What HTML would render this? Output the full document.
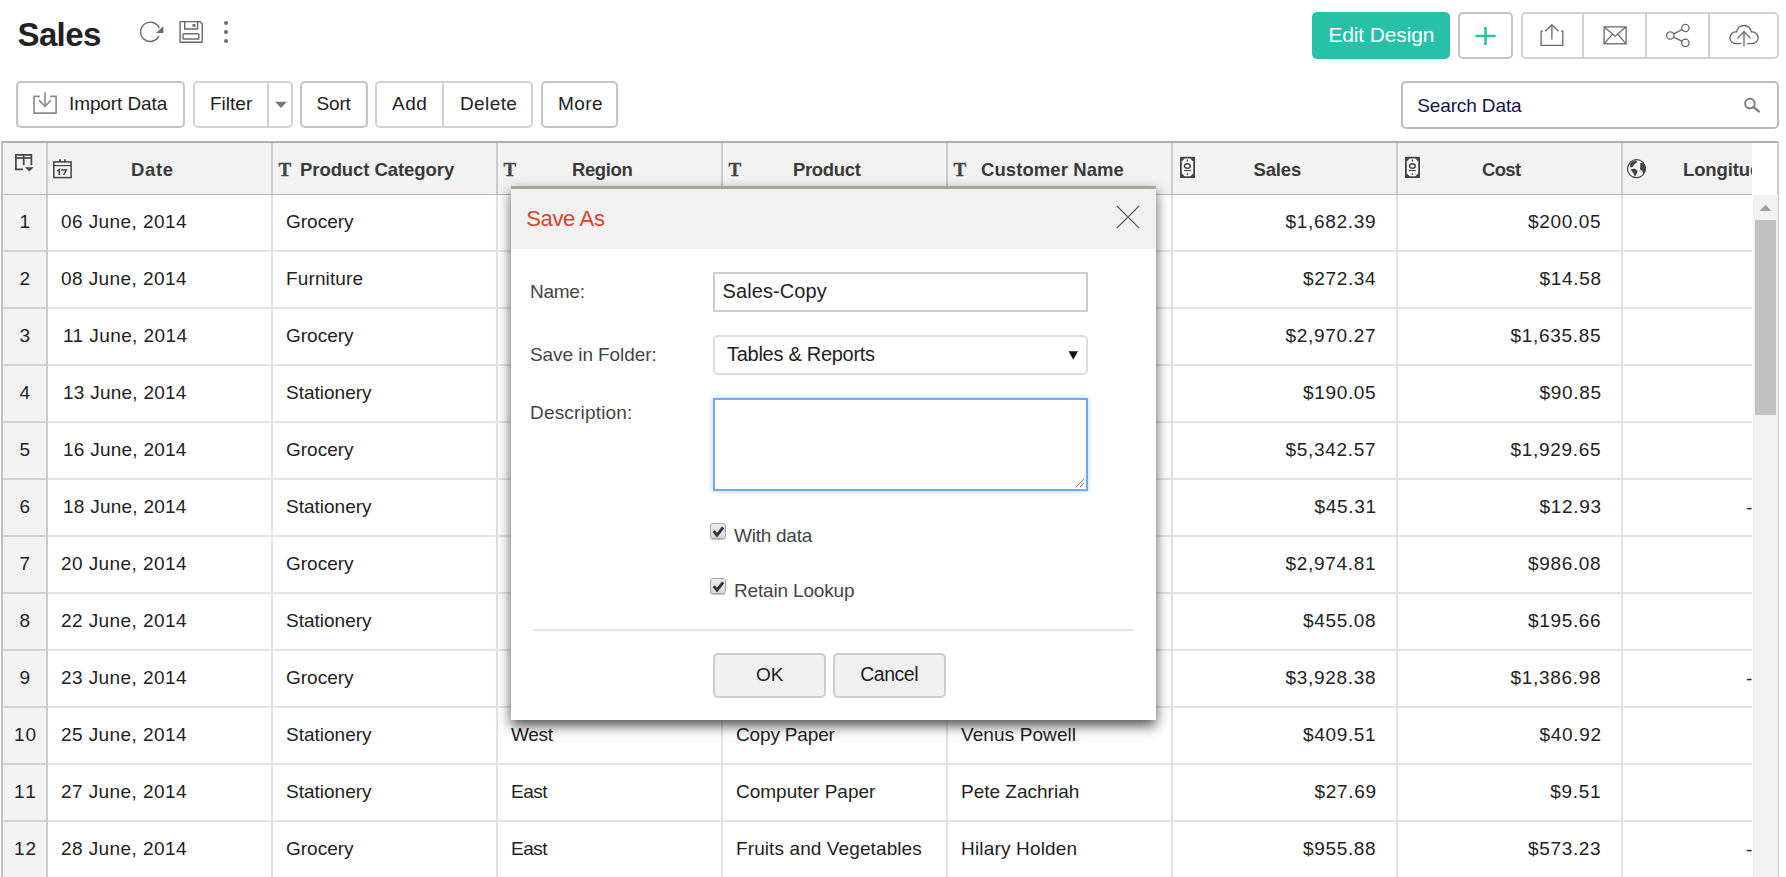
<!DOCTYPE html>
<html><head><meta charset="utf-8"><title>Sales</title>
<style>
html,body{margin:0;padding:0;background:#fff;}
body{width:1786px;height:877px;overflow:hidden;position:relative;font-family:"Liberation Sans",sans-serif;}
.t{position:absolute;white-space:pre;line-height:24px;height:24px;display:block;}
.b{position:absolute;box-sizing:border-box;}
svg{position:absolute;overflow:visible;}
</style></head><body>
<span class="t" style="left:17.50px;top:22.60px;font-size:33px;font-weight:700;color:#222;letter-spacing:-0.625px;">Sales</span>
<div class="b" style="left:224px;top:20.9px;width:4px;height:4px;background:#6b6b6b;border-radius:50%"></div>
<div class="b" style="left:224px;top:30px;width:4px;height:4px;background:#6b6b6b;border-radius:50%"></div>
<div class="b" style="left:224px;top:39px;width:4px;height:4px;background:#6b6b6b;border-radius:50%"></div>
<div class="b" style="left:16px;top:81px;width:169px;height:47px;border:2px solid #c4c4c4;border-radius:5px;background:#fff;"></div>
<span class="t" style="left:69.00px;top:92.00px;font-size:19px;font-weight:400;color:#222;letter-spacing:-0.100px;">Import Data</span>
<div class="b" style="left:193px;top:81px;width:100px;height:47px;border:2px solid #d2d2d2;border-radius:5px;background:#fff;"></div>
<div class="b" style="left:267px;top:83px;width:2px;height:43px;background:#d2d2d2"></div>
<span class="t" style="left:210.00px;top:92.00px;font-size:19px;font-weight:400;color:#222;letter-spacing:0.000px;">Filter</span>
<div class="b" style="left:300px;top:81px;width:68px;height:47px;border:2px solid #c4c4c4;border-radius:5px;background:#fff;"></div>
<span class="t" style="left:316.60px;top:92.00px;font-size:19px;font-weight:400;color:#222;letter-spacing:-0.200px;">Sort</span>
<div class="b" style="left:375px;top:81px;width:158px;height:47px;border:2px solid #d2d2d2;border-radius:5px;background:#fff;"></div>
<div class="b" style="left:442px;top:83px;width:2px;height:43px;background:#d2d2d2"></div>
<span class="t" style="left:392.00px;top:92.00px;font-size:19px;font-weight:400;color:#222;letter-spacing:0.500px;">Add</span>
<span class="t" style="left:460.00px;top:92.00px;font-size:19px;font-weight:400;color:#222;letter-spacing:0.400px;">Delete</span>
<div class="b" style="left:541px;top:81px;width:77px;height:47px;border:2px solid #c4c4c4;border-radius:5px;background:#fff;"></div>
<span class="t" style="left:558.00px;top:92.00px;font-size:19px;font-weight:400;color:#222;letter-spacing:0.433px;">More</span>
<div class="b" style="left:1312px;top:12px;width:138px;height:47px;background:#27c1a9;border-radius:5px;"></div>
<span class="t" style="left:1328.40px;top:23.00px;font-size:21px;font-weight:400;color:#fff;letter-spacing:-0.140px;">Edit Design</span>
<div class="b" style="left:1458px;top:12px;width:55px;height:47px;border:2px solid #c4c4c4;border-radius:5px;background:#fff;"></div>
<div class="b" style="left:1521px;top:12px;width:258px;height:47px;border:2px solid #d2d2d2;border-radius:5px;background:#fff;"></div>
<div class="b" style="left:1582px;top:14px;width:2px;height:43px;background:#d2d2d2"></div>
<div class="b" style="left:1645px;top:14px;width:2px;height:43px;background:#d2d2d2"></div>
<div class="b" style="left:1708px;top:14px;width:2px;height:43px;background:#d2d2d2"></div>
<div class="b" style="left:1401px;top:81px;width:378px;height:48px;border:2px solid #bbb;border-radius:5px;background:#fff;"></div>
<span class="t" style="left:1417.20px;top:94.00px;font-size:19px;font-weight:400;color:#15154a;letter-spacing:-0.120px;">Search Data</span>
<div class="b" style="left:1px;top:141px;width:1778px;height:54px;background:#f2f2f2"></div>
<div class="b" style="left:1752px;top:143px;width:25px;height:52px;background:#fff"></div>
<div class="b" style="left:1px;top:195px;width:46px;height:690px;background:#f2f2f2"></div>
<div class="b" style="left:1px;top:141px;width:1778px;height:2px;background:#b0b0b0"></div>
<div class="b" style="left:1px;top:141px;width:2px;height:740px;background:#c0c0c0"></div>
<div class="b" style="left:1777px;top:141px;width:2px;height:740px;background:#ccc"></div>
<div class="b" style="left:1753px;top:195px;width:24.8px;height:690px;background:#f1f1f1"></div>
<div class="b" style="left:1755px;top:220px;width:21px;height:195px;background:#c1c1c1"></div>
<div class="b" style="left:3px;top:194px;width:1749px;height:1px;background:#b8b8b8"></div>
<div class="b" style="left:3px;top:250px;width:45px;height:2px;background:#d0d0d0"></div>
<div class="b" style="left:48px;top:250px;width:1704px;height:2px;background:#e4e4e4"></div>
<div class="b" style="left:3px;top:307px;width:45px;height:2px;background:#d0d0d0"></div>
<div class="b" style="left:48px;top:307px;width:1704px;height:2px;background:#e4e4e4"></div>
<div class="b" style="left:3px;top:364px;width:45px;height:2px;background:#d0d0d0"></div>
<div class="b" style="left:48px;top:364px;width:1704px;height:2px;background:#e4e4e4"></div>
<div class="b" style="left:3px;top:421px;width:45px;height:2px;background:#d0d0d0"></div>
<div class="b" style="left:48px;top:421px;width:1704px;height:2px;background:#e4e4e4"></div>
<div class="b" style="left:3px;top:478px;width:45px;height:2px;background:#d0d0d0"></div>
<div class="b" style="left:48px;top:478px;width:1704px;height:2px;background:#e4e4e4"></div>
<div class="b" style="left:3px;top:535px;width:45px;height:2px;background:#d0d0d0"></div>
<div class="b" style="left:48px;top:535px;width:1704px;height:2px;background:#e4e4e4"></div>
<div class="b" style="left:3px;top:592px;width:45px;height:2px;background:#d0d0d0"></div>
<div class="b" style="left:48px;top:592px;width:1704px;height:2px;background:#e4e4e4"></div>
<div class="b" style="left:3px;top:649px;width:45px;height:2px;background:#d0d0d0"></div>
<div class="b" style="left:48px;top:649px;width:1704px;height:2px;background:#e4e4e4"></div>
<div class="b" style="left:3px;top:706px;width:45px;height:2px;background:#d0d0d0"></div>
<div class="b" style="left:48px;top:706px;width:1704px;height:2px;background:#e4e4e4"></div>
<div class="b" style="left:3px;top:763px;width:45px;height:2px;background:#d0d0d0"></div>
<div class="b" style="left:48px;top:763px;width:1704px;height:2px;background:#e4e4e4"></div>
<div class="b" style="left:3px;top:820px;width:45px;height:2px;background:#d0d0d0"></div>
<div class="b" style="left:48px;top:820px;width:1704px;height:2px;background:#e4e4e4"></div>
<div class="b" style="left:3px;top:877px;width:45px;height:2px;background:#d0d0d0"></div>
<div class="b" style="left:48px;top:877px;width:1704px;height:2px;background:#e4e4e4"></div>
<div class="b" style="left:46px;top:143px;width:2px;height:51px;background:#cbcbcb"></div>
<div class="b" style="left:46px;top:195px;width:2px;height:690px;background:#ccc"></div>
<div class="b" style="left:271px;top:143px;width:2px;height:51px;background:#cbcbcb"></div>
<div class="b" style="left:271px;top:195px;width:2px;height:690px;background:#e2e2e2"></div>
<div class="b" style="left:496px;top:143px;width:2px;height:51px;background:#cbcbcb"></div>
<div class="b" style="left:496px;top:195px;width:2px;height:690px;background:#e2e2e2"></div>
<div class="b" style="left:721px;top:143px;width:2px;height:51px;background:#cbcbcb"></div>
<div class="b" style="left:721px;top:195px;width:2px;height:690px;background:#e2e2e2"></div>
<div class="b" style="left:946px;top:143px;width:2px;height:51px;background:#cbcbcb"></div>
<div class="b" style="left:946px;top:195px;width:2px;height:690px;background:#e2e2e2"></div>
<div class="b" style="left:1171px;top:143px;width:2px;height:51px;background:#cbcbcb"></div>
<div class="b" style="left:1171px;top:195px;width:2px;height:690px;background:#e2e2e2"></div>
<div class="b" style="left:1396px;top:143px;width:2px;height:51px;background:#cbcbcb"></div>
<div class="b" style="left:1396px;top:195px;width:2px;height:690px;background:#e2e2e2"></div>
<div class="b" style="left:1621px;top:143px;width:2px;height:51px;background:#cbcbcb"></div>
<div class="b" style="left:1621px;top:195px;width:2px;height:690px;background:#e2e2e2"></div>
<span class="t" style="left:131.00px;top:158.00px;font-size:18.5px;font-weight:700;color:#3a3a3a;letter-spacing:0.667px;">Date</span>
<span class="t" style="left:300.00px;top:158.00px;font-size:18.5px;font-weight:700;color:#3a3a3a;letter-spacing:-0.067px;">Product Category</span>
<span class="t" style="left:572.00px;top:158.00px;font-size:18.5px;font-weight:700;color:#3a3a3a;letter-spacing:-0.400px;">Region</span>
<span class="t" style="left:793.00px;top:158.00px;font-size:18.5px;font-weight:700;color:#3a3a3a;letter-spacing:-0.333px;">Product</span>
<span class="t" style="left:981.00px;top:158.00px;font-size:18.5px;font-weight:700;color:#3a3a3a;letter-spacing:0.083px;">Customer Name</span>
<span class="t" style="left:1253.40px;top:158.00px;font-size:18.5px;font-weight:700;color:#3a3a3a;letter-spacing:-0.100px;">Sales</span>
<span class="t" style="left:1482.00px;top:158.00px;font-size:18.5px;font-weight:700;color:#3a3a3a;letter-spacing:-0.667px;">Cost</span>
<div class="b" style="left:1660px;top:150px;width:92px;height:40px;overflow:hidden">
<span class="t" style="left:23.00px;top:8.00px;font-size:18.5px;font-weight:700;color:#3a3a3a;letter-spacing:-0.125px;">Longitude</span>
</div>
<span class="t" style="left:278.60px;top:158.00px;font-size:19px;font-weight:700;color:#444;letter-spacing:0.000px;font-family:'Liberation Serif',serif;-webkit-text-stroke:0.35px #444;">T</span>
<span class="t" style="left:503.60px;top:158.00px;font-size:19px;font-weight:700;color:#444;letter-spacing:0.000px;font-family:'Liberation Serif',serif;-webkit-text-stroke:0.35px #444;">T</span>
<span class="t" style="left:728.60px;top:158.00px;font-size:19px;font-weight:700;color:#444;letter-spacing:0.000px;font-family:'Liberation Serif',serif;-webkit-text-stroke:0.35px #444;">T</span>
<span class="t" style="left:953.60px;top:158.00px;font-size:19px;font-weight:700;color:#444;letter-spacing:0.000px;font-family:'Liberation Serif',serif;-webkit-text-stroke:0.35px #444;">T</span>
<svg style="left:0;top:0" width="1786" height="877" viewBox="0 0 1786 877" fill="none">
<g stroke="#696969" stroke-width="1.4">
<path d="M159.25 28.19 A9.65 9.65 0 1 0 158.90 36.18"/>
<path d="M163.4 26 V32.9 H156.1 Z" fill="#696969" stroke="none"/>
<path d="M180.1 21.6 H199.7 L202.2 24.1 V42.2 H180.1 Z" stroke-linejoin="round"/>
<path d="M184.7 21.8 V29 H197.6 V21.8" stroke-linejoin="round"/>
<rect x="183" y="33.8" width="15.9" height="5.2" rx="0.8"/>
<rect x="192.5" y="24.1" width="3" height="2.7" fill="#696969" stroke="none"/>
</g>
<g stroke="#8a8a8a" stroke-width="1.6">
<path d="M39.8 96.4 H34 V113.1 H56.1 V96.4 H50.2"/><path d="M45 92.2 V106"/><path d="M39 100.1 L45 106.3 L51 100.1"/>
</g>
<path d="M275 101.7 H286.9 L280.95 108 Z" fill="#777"/>
<path d="M1485.5 27 V45 M1475.4 36 H1495.7" stroke="#27c1a9" stroke-width="2.6"/>
<g stroke="#696969" stroke-width="1.3">
<path d="M1543 31.1 H1541.1 V45.4 H1562.8 V31.1 H1560.9"/><path d="M1551.9 39.4 V25"/><path d="M1545.3 31.3 L1551.9 24.7 L1558.5 31.3"/>
<rect x="1604.1" y="26.9" width="22" height="16.9"/><path d="M1604.3 27.1 L1615.1 36.2 L1625.9 27.1 M1604.3 43.6 L1612.3 34.4 M1625.9 43.6 L1617.9 34.4"/>
<circle cx="1670.3" cy="35.5" r="3.7"/><circle cx="1685.4" cy="28" r="3.7"/><circle cx="1685.4" cy="42.9" r="3.7"/><path d="M1673.6 33.8 L1682.1 29.7 M1673.6 37.2 L1682.1 41.3"/>
<path d="M1741.5 43.7 H1735.7 A5.9 5.9 0 1 1 1736.6 31.95 A7.47 7.47 0 0 1 1751.4 31.95 A5.9 5.9 0 1 1 1752.3 43.7 H1747"/>
<path d="M1744 46.6 V31.8"/><path d="M1737.4 38.4 L1744 31.6 L1750.6 38.4"/>
</g>
<g stroke="#7c7c7c" stroke-width="1.9"><circle cx="1749.9" cy="103.6" r="4.8"/><path d="M1753.6 107.2 L1758.9 111.6" stroke-width="2.3" stroke-linecap="round"/></g>
<path d="M1759.7 211 L1765.45 204.8 L1771.2 211 Z" fill="#a0a0a0"/>
<g stroke="#444" stroke-width="1.7">
<path d="M22.9 169.3 H15.9 V154.9 H31.4 V165.2"/><path d="M15.9 158 H31.4" /><path d="M23.7 154.9 V165.2"/>
<path d="M25 167.2 H33.6 L29.3 171.6 Z" fill="#444" stroke="none"/>
</g>
<g stroke="#444" stroke-width="1.5">
<rect x="53.8" y="161.9" width="17.3" height="15.7"/><path d="M53.8 165.6 H71.1" stroke-width="1.2"/><path d="M60 159.2 V162 M64.9 159.2 V162" stroke-width="1.7"/>
<path d="M57.2 171 L59.3 169.7 V175 M61.2 170.1 H66.4 L63.6 175" stroke-width="1.5"/>
</g>
<g transform="translate(1180,156.8)"><rect x="0" y="0" width="15" height="21.2" fill="#444"/><path d="M4.7 1.7 H10.3 L13.2 4.6 V16.6 L10.3 19.5 H4.7 L1.8 16.6 V4.6 Z" fill="#fafafa"/><ellipse cx="7.4" cy="9.2" rx="2.9" ry="2.2" stroke="#444" stroke-width="1.4"/><path d="M4 13.7 H10.8" stroke="#444" stroke-width="1.1"/><path d="M7.4 2.8 V4.8 M7.4 16.4 V18.3" stroke="#444" stroke-width="1.3"/></g><g transform="translate(1405,156.8)"><rect x="0" y="0" width="15" height="21.2" fill="#444"/><path d="M4.7 1.7 H10.3 L13.2 4.6 V16.6 L10.3 19.5 H4.7 L1.8 16.6 V4.6 Z" fill="#fafafa"/><ellipse cx="7.4" cy="9.2" rx="2.9" ry="2.2" stroke="#444" stroke-width="1.4"/><path d="M4 13.7 H10.8" stroke="#444" stroke-width="1.1"/><path d="M7.4 2.8 V4.8 M7.4 16.4 V18.3" stroke="#444" stroke-width="1.3"/></g>
<circle cx="1636.5" cy="168.7" r="9" fill="#f6f6f6" stroke="#444" stroke-width="1.2"/>
<path d="M1629.4 164.6 L1632.2 161.6 L1636.4 160.4 L1637 162.6 L1634.4 164.2 L1633.2 166.6 L1631 167.8 Z M1630.6 169.4 L1634.6 168.6 L1637.6 170.8 L1636.6 174 L1634.8 176.8 L1633.4 173.2 Z M1640 163.4 L1643.4 162.8 L1645.4 166 L1645.6 170.6 L1643.6 174.4 L1642.2 170.8 L1639.8 169.6 L1640.4 166.8 Z" fill="#444"/>
</svg>
<span class="t" style="left:19.50px;top:210.00px;font-size:19px;font-weight:400;color:#222;letter-spacing:0.000px;">1</span>
<span class="t" style="left:61.00px;top:210.00px;font-size:19px;font-weight:400;color:#222;letter-spacing:0.417px;">06 June, 2014</span>
<span class="t" style="left:286.00px;top:210.00px;font-size:19px;font-weight:400;color:#222;letter-spacing:0.000px;">Grocery</span>
<span class="t" style="left:1285.56px;top:210.00px;font-size:19px;font-weight:400;color:#222;letter-spacing:0.680px;">$1,682.39</span>
<span class="t" style="left:1527.92px;top:210.00px;font-size:19px;font-weight:400;color:#222;letter-spacing:0.680px;">$200.05</span>
<span class="t" style="left:19.50px;top:267.00px;font-size:19px;font-weight:400;color:#222;letter-spacing:0.000px;">2</span>
<span class="t" style="left:61.00px;top:267.00px;font-size:19px;font-weight:400;color:#222;letter-spacing:0.417px;">08 June, 2014</span>
<span class="t" style="left:286.00px;top:267.00px;font-size:19px;font-weight:400;color:#222;letter-spacing:0.125px;">Furniture</span>
<span class="t" style="left:1302.92px;top:267.00px;font-size:19px;font-weight:400;color:#222;letter-spacing:0.680px;">$272.34</span>
<span class="t" style="left:1539.60px;top:267.00px;font-size:19px;font-weight:400;color:#222;letter-spacing:0.680px;">$14.58</span>
<span class="t" style="left:19.50px;top:324.00px;font-size:19px;font-weight:400;color:#222;letter-spacing:0.000px;">3</span>
<span class="t" style="left:63.00px;top:324.00px;font-size:19px;font-weight:400;color:#222;letter-spacing:0.417px;">11 June, 2014</span>
<span class="t" style="left:286.00px;top:324.00px;font-size:19px;font-weight:400;color:#222;letter-spacing:0.000px;">Grocery</span>
<span class="t" style="left:1285.56px;top:324.00px;font-size:19px;font-weight:400;color:#222;letter-spacing:0.680px;">$2,970.27</span>
<span class="t" style="left:1510.56px;top:324.00px;font-size:19px;font-weight:400;color:#222;letter-spacing:0.680px;">$1,635.85</span>
<span class="t" style="left:19.50px;top:381.00px;font-size:19px;font-weight:400;color:#222;letter-spacing:0.000px;">4</span>
<span class="t" style="left:63.00px;top:381.00px;font-size:19px;font-weight:400;color:#222;letter-spacing:0.250px;">13 June, 2014</span>
<span class="t" style="left:286.00px;top:381.00px;font-size:19px;font-weight:400;color:#222;letter-spacing:0.000px;">Stationery</span>
<span class="t" style="left:1302.92px;top:381.00px;font-size:19px;font-weight:400;color:#222;letter-spacing:0.680px;">$190.05</span>
<span class="t" style="left:1539.60px;top:381.00px;font-size:19px;font-weight:400;color:#222;letter-spacing:0.680px;">$90.85</span>
<span class="t" style="left:19.50px;top:438.00px;font-size:19px;font-weight:400;color:#222;letter-spacing:0.000px;">5</span>
<span class="t" style="left:63.00px;top:438.00px;font-size:19px;font-weight:400;color:#222;letter-spacing:0.250px;">16 June, 2014</span>
<span class="t" style="left:286.00px;top:438.00px;font-size:19px;font-weight:400;color:#222;letter-spacing:0.000px;">Grocery</span>
<span class="t" style="left:1285.56px;top:438.00px;font-size:19px;font-weight:400;color:#222;letter-spacing:0.680px;">$5,342.57</span>
<span class="t" style="left:1510.56px;top:438.00px;font-size:19px;font-weight:400;color:#222;letter-spacing:0.680px;">$1,929.65</span>
<span class="t" style="left:19.50px;top:495.00px;font-size:19px;font-weight:400;color:#222;letter-spacing:0.000px;">6</span>
<span class="t" style="left:63.00px;top:495.00px;font-size:19px;font-weight:400;color:#222;letter-spacing:0.250px;">18 June, 2014</span>
<span class="t" style="left:286.00px;top:495.00px;font-size:19px;font-weight:400;color:#222;letter-spacing:0.000px;">Stationery</span>
<span class="t" style="left:1314.60px;top:495.00px;font-size:19px;font-weight:400;color:#222;letter-spacing:0.680px;">$45.31</span>
<span class="t" style="left:1539.60px;top:495.00px;font-size:19px;font-weight:400;color:#222;letter-spacing:0.680px;">$12.93</span>
<span class="t" style="left:1746.00px;top:496.00px;font-size:19px;font-weight:400;color:#222;letter-spacing:0.000px;">-</span>
<span class="t" style="left:19.50px;top:552.00px;font-size:19px;font-weight:400;color:#222;letter-spacing:0.000px;">7</span>
<span class="t" style="left:61.00px;top:552.00px;font-size:19px;font-weight:400;color:#222;letter-spacing:0.417px;">20 June, 2014</span>
<span class="t" style="left:286.00px;top:552.00px;font-size:19px;font-weight:400;color:#222;letter-spacing:0.000px;">Grocery</span>
<span class="t" style="left:1285.56px;top:552.00px;font-size:19px;font-weight:400;color:#222;letter-spacing:0.680px;">$2,974.81</span>
<span class="t" style="left:1527.92px;top:552.00px;font-size:19px;font-weight:400;color:#222;letter-spacing:0.680px;">$986.08</span>
<span class="t" style="left:19.50px;top:609.00px;font-size:19px;font-weight:400;color:#222;letter-spacing:0.000px;">8</span>
<span class="t" style="left:61.00px;top:609.00px;font-size:19px;font-weight:400;color:#222;letter-spacing:0.417px;">22 June, 2014</span>
<span class="t" style="left:286.00px;top:609.00px;font-size:19px;font-weight:400;color:#222;letter-spacing:0.000px;">Stationery</span>
<span class="t" style="left:1302.92px;top:609.00px;font-size:19px;font-weight:400;color:#222;letter-spacing:0.680px;">$455.08</span>
<span class="t" style="left:1527.92px;top:609.00px;font-size:19px;font-weight:400;color:#222;letter-spacing:0.680px;">$195.66</span>
<span class="t" style="left:19.50px;top:666.00px;font-size:19px;font-weight:400;color:#222;letter-spacing:0.000px;">9</span>
<span class="t" style="left:61.00px;top:666.00px;font-size:19px;font-weight:400;color:#222;letter-spacing:0.417px;">23 June, 2014</span>
<span class="t" style="left:286.00px;top:666.00px;font-size:19px;font-weight:400;color:#222;letter-spacing:0.000px;">Grocery</span>
<span class="t" style="left:1285.56px;top:666.00px;font-size:19px;font-weight:400;color:#222;letter-spacing:0.680px;">$3,928.38</span>
<span class="t" style="left:1510.56px;top:666.00px;font-size:19px;font-weight:400;color:#222;letter-spacing:0.680px;">$1,386.98</span>
<span class="t" style="left:1746.00px;top:667.00px;font-size:19px;font-weight:400;color:#222;letter-spacing:0.000px;">-</span>
<span class="t" style="left:14.00px;top:723.00px;font-size:19px;font-weight:400;color:#222;letter-spacing:1.000px;">10</span>
<span class="t" style="left:61.00px;top:723.00px;font-size:19px;font-weight:400;color:#222;letter-spacing:0.417px;">25 June, 2014</span>
<span class="t" style="left:286.00px;top:723.00px;font-size:19px;font-weight:400;color:#222;letter-spacing:0.000px;">Stationery</span>
<span class="t" style="left:511.00px;top:723.00px;font-size:19px;font-weight:400;color:#222;letter-spacing:-0.267px;">West</span>
<span class="t" style="left:736.00px;top:723.00px;font-size:19px;font-weight:400;color:#222;letter-spacing:-0.156px;">Copy Paper</span>
<span class="t" style="left:961.00px;top:723.00px;font-size:19px;font-weight:400;color:#222;letter-spacing:0.091px;">Venus Powell</span>
<span class="t" style="left:1302.92px;top:723.00px;font-size:19px;font-weight:400;color:#222;letter-spacing:0.680px;">$409.51</span>
<span class="t" style="left:1539.60px;top:723.00px;font-size:19px;font-weight:400;color:#222;letter-spacing:0.680px;">$40.92</span>
<span class="t" style="left:14.00px;top:780.00px;font-size:19px;font-weight:400;color:#222;letter-spacing:2.000px;">11</span>
<span class="t" style="left:61.00px;top:780.00px;font-size:19px;font-weight:400;color:#222;letter-spacing:0.417px;">27 June, 2014</span>
<span class="t" style="left:286.00px;top:780.00px;font-size:19px;font-weight:400;color:#222;letter-spacing:0.000px;">Stationery</span>
<span class="t" style="left:511.00px;top:780.00px;font-size:19px;font-weight:400;color:#222;letter-spacing:-0.533px;">East</span>
<span class="t" style="left:736.00px;top:780.00px;font-size:19px;font-weight:400;color:#222;letter-spacing:0.000px;">Computer Paper</span>
<span class="t" style="left:961.00px;top:780.00px;font-size:19px;font-weight:400;color:#222;letter-spacing:0.000px;">Pete Zachriah</span>
<span class="t" style="left:1314.60px;top:780.00px;font-size:19px;font-weight:400;color:#222;letter-spacing:0.680px;">$27.69</span>
<span class="t" style="left:1550.28px;top:780.00px;font-size:19px;font-weight:400;color:#222;letter-spacing:0.680px;">$9.51</span>
<span class="t" style="left:14.00px;top:837.00px;font-size:19px;font-weight:400;color:#222;letter-spacing:1.000px;">12</span>
<span class="t" style="left:61.00px;top:837.00px;font-size:19px;font-weight:400;color:#222;letter-spacing:0.417px;">28 June, 2014</span>
<span class="t" style="left:286.00px;top:837.00px;font-size:19px;font-weight:400;color:#222;letter-spacing:0.000px;">Grocery</span>
<span class="t" style="left:511.00px;top:837.00px;font-size:19px;font-weight:400;color:#222;letter-spacing:-0.533px;">East</span>
<span class="t" style="left:736.00px;top:837.00px;font-size:19px;font-weight:400;color:#222;letter-spacing:0.100px;">Fruits and Vegetables</span>
<span class="t" style="left:961.00px;top:837.00px;font-size:19px;font-weight:400;color:#222;letter-spacing:0.167px;">Hilary Holden</span>
<span class="t" style="left:1302.92px;top:837.00px;font-size:19px;font-weight:400;color:#222;letter-spacing:0.680px;">$955.88</span>
<span class="t" style="left:1527.92px;top:837.00px;font-size:19px;font-weight:400;color:#222;letter-spacing:0.680px;">$573.23</span>
<span class="t" style="left:1746.00px;top:838.00px;font-size:19px;font-weight:400;color:#222;letter-spacing:0.000px;">-</span>
<div class="b" style="left:511px;top:186px;width:645px;height:534px;background:#fff;box-shadow:0 6px 12px rgba(0,0,0,.67);"></div>
<div class="b" style="left:511px;top:186px;width:645px;height:63px;background:#f1f1f1"></div>
<div class="b" style="left:511px;top:186px;width:645px;height:3px;background:#a6a696"></div>
<span class="t" style="left:526.20px;top:207.30px;font-size:22px;font-weight:400;color:#d8442f;letter-spacing:-0.333px;">Save As</span>
<span class="t" style="left:530.00px;top:280.00px;font-size:19px;font-weight:400;color:#444;letter-spacing:-0.250px;">Name:</span>
<div class="b" style="left:713px;top:272px;width:375px;height:40px;border:2px solid #ccc;background:#fff"></div>
<span class="t" style="left:722.60px;top:279.00px;font-size:20px;font-weight:400;color:#222;letter-spacing:0.089px;">Sales-Copy</span>
<span class="t" style="left:530.00px;top:343.00px;font-size:19px;font-weight:400;color:#444;letter-spacing:-0.071px;">Save in Folder:</span>
<div class="b" style="left:713px;top:335px;width:375px;height:40px;border:2px solid #ddd;border-radius:5px;background:#fff"></div>
<span class="t" style="left:727.00px;top:342.00px;font-size:20px;font-weight:400;color:#222;letter-spacing:-0.280px;">Tables &amp; Reports</span>
<span class="t" style="left:530.00px;top:401.00px;font-size:19px;font-weight:400;color:#444;letter-spacing:0.182px;">Description:</span>
<div class="b" style="left:713px;top:398px;width:375px;height:93px;border:2px solid #6faaea;background:#fff;box-shadow:0 0 5px rgba(102,175,233,.55)"></div>
<div class="b" style="left:710.4px;top:523.2px;width:15.6px;height:15.4px;border:1px solid #a8a8a8;border-radius:3px;background:linear-gradient(#ececec,#dadada);box-shadow:0 1px 1px rgba(0,0,0,.25)"></div>
<div class="b" style="left:710.4px;top:578.2px;width:15.6px;height:15.4px;border:1px solid #a8a8a8;border-radius:3px;background:linear-gradient(#ececec,#dadada);box-shadow:0 1px 1px rgba(0,0,0,.25)"></div>
<span class="t" style="left:734.00px;top:524.00px;font-size:19px;font-weight:400;color:#444;letter-spacing:-0.250px;">With data</span>
<span class="t" style="left:734.00px;top:579.00px;font-size:19px;font-weight:400;color:#444;letter-spacing:-0.167px;">Retain Lookup</span>
<div class="b" style="left:533px;top:629px;width:600px;height:2px;background:#e3e3e3"></div>
<div class="b" style="left:713px;top:653px;width:113px;height:45px;border:2px solid #ccc;border-radius:5px;background:#f0f0f0;"></div>
<div class="b" style="left:833px;top:653px;width:113px;height:45px;border:2px solid #ccc;border-radius:5px;background:#f0f0f0;"></div>
<span class="t" style="left:756.00px;top:663.40px;font-size:19px;font-weight:400;color:#222;letter-spacing:0.000px;">OK</span>
<span class="t" style="left:860.20px;top:662.40px;font-size:19.5px;font-weight:400;color:#222;letter-spacing:-0.460px;">Cancel</span>
<svg style="left:0;top:0" width="1786" height="877" viewBox="0 0 1786 877" fill="none">
<path d="M1116.9 206 L1139.1 228 M1139.1 206 L1116.9 228" stroke="#5c5c5c" stroke-width="1.15"/>
<path d="M1068.6 351.2 H1078 L1073.3 359.8 Z" fill="#111"/>
<path d="M1084 479 L1076 487 M1084 483 L1080 487" stroke="#777" stroke-width="1"/>
<path d="M713.7 531.1 L717 535.2 L723.1 527.3" stroke="#333" stroke-width="2.9"/>
<path d="M713.7 586.1 L717 590.2 L723.1 582.3" stroke="#333" stroke-width="2.9"/>
</svg>
</body></html>
